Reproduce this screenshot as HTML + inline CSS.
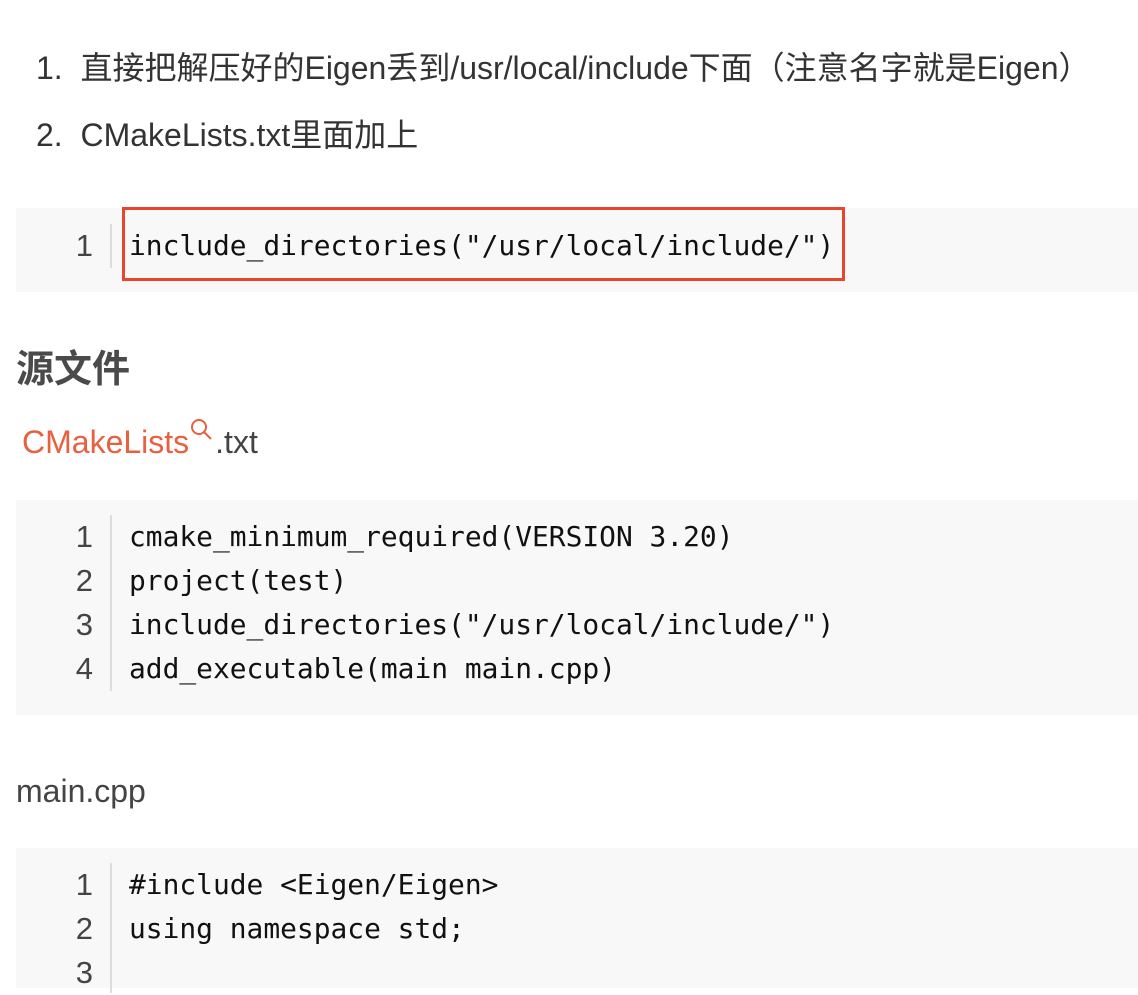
<!DOCTYPE html>
<html><head><meta charset="utf-8"><style>
body{margin:0;width:1138px;height:988px;overflow:hidden;background:#fff;font-family:"Liberation Sans","Noto Sans CJK SC",sans-serif;color:#333;}
.t{position:absolute;font-size:32px;line-height:40px;white-space:nowrap;}
.code{position:absolute;left:16px;width:1122px;background:#f8f8f8;}
.ln{position:absolute;width:77px;text-align:right;font-family:"Liberation Sans",sans-serif;font-size:31px;color:#444;}
.bar{position:absolute;left:94px;width:2px;background:#ddd;}
.cl{position:absolute;left:113px;font-family:"DejaVu Sans Mono","Liberation Mono",monospace;font-size:27.9px;color:#111;white-space:pre;line-height:44px;}
</style></head><body>
<div class="t" style="left:36px;top:48px">1.&nbsp; 直接把解压好的Eigen丢到/usr/local/include下面（注意名字就是Eigen）</div>
<div class="t" style="left:36px;top:115px">2.&nbsp; CMakeLists.txt里面加上</div>

<div class="code" style="top:208px;height:84px">
 <div class="ln" style="top:16px;line-height:44px">1</div>
 <div class="bar" style="top:16px;height:44px"></div>
 <div class="cl" style="top:16px">include_directories("/usr/local/include/")</div>
</div>
<div style="position:absolute;left:122px;top:207px;width:717px;height:68px;border:3px solid #e8452c"></div>

<div class="t" style="left:16px;top:348px;font-size:38px;font-weight:bold;color:#4a4a4a;line-height:44px">源文件</div>
<div class="t" style="left:22px;top:422px"><span style="color:#e8603f">CMakeLists</span><svg width="26" height="26" viewBox="0 0 26 26" style="position:relative;top:-10px"><circle cx="10" cy="10" r="7" fill="none" stroke="#e8603f" stroke-width="2"/><line x1="15" y1="15" x2="22" y2="22" stroke="#e8603f" stroke-width="2"/></svg><span style="color:#444">.txt</span></div>

<div class="code" style="top:500px;height:215px">
 <div class="ln" style="top:15px;line-height:44px">1<br>2<br>3<br>4</div>
 <div class="bar" style="top:15px;height:176px"></div>
 <div class="cl" style="top:15px">cmake_minimum_required(VERSION 3.20)
project(test)
include_directories("/usr/local/include/")
add_executable(main main.cpp)</div>
</div>

<div class="t" style="left:16px;top:771px;color:#444">main.cpp</div>

<div class="code" style="top:848px;height:140px">
 <div class="ln" style="top:15px;line-height:44px">1<br>2<br>3</div>
 <div class="bar" style="top:15px;height:130px"></div>
 <div class="cl" style="top:15px">#include &lt;Eigen/Eigen&gt;
using namespace std;
</div>
</div>
</body></html>
